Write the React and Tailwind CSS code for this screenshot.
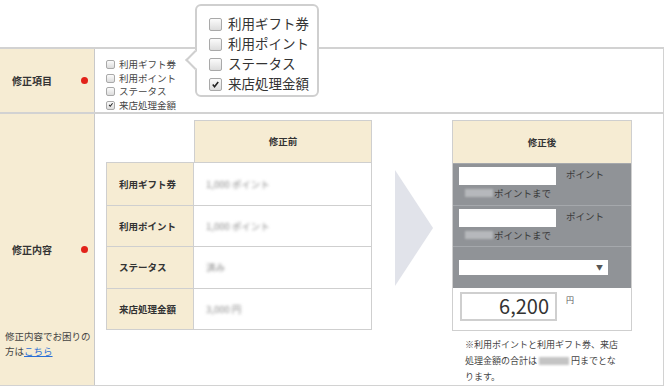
import React from 'react'

const font = { fontFamily: '"Noto Sans CJK JP", "Noto Sans", sans-serif' }

const Box = ({ checked, size }) => (
  <span
    className={`inline-flex items-center justify-center rounded-[2px] border border-[#a9a9a9] bg-gradient-to-b from-[#fbfbfb] to-[#dcdcdc] ${size}`}
  >
    {checked && (
      <svg viewBox="0 0 10 10" className="w-[80%] h-[80%]">
        <path d="M2 5.2 L4 7.6 L8.2 2.2" fill="none" stroke="#222" strokeWidth="1.8" />
      </svg>
    )}
  </span>
)

const items = ['利用ギフト券', '利用ポイント', 'ステータス', '来店処理金額']

const Blur = ({ children }) => (
  <span className="text-[#8a8a8a] blur-[1.4px]">{children}</span>
)

export default function App() {
  const rows = [
    ['利用ギフト券', '1,000 ポイント'],
    ['利用ポイント', '1,000 ポイント'],
    ['ステータス', '済み'],
    ['来店処理金額', '3,000 円'],
  ]
  return (
    <div className="relative w-[664px] h-[386px] bg-white text-[#333]" style={font}>
      {/* popup */}
      <div className="absolute left-[195px] top-[4px] w-[124px] h-[93px] rounded-[6px] border-2 border-[#cfcfcf] bg-white z-10 pl-[12px] pt-[8px]">
        <div className="absolute left-[-9px] top-[47px] w-[14px] h-[14px] rotate-45 border-l-2 border-b-2 border-[#cfcfcf] bg-white"></div>
        {items.map((t, i) => (
          <div key={t} className="flex items-center gap-[6px] h-[20px] text-[13.5px] leading-none text-[#333] relative">
            <Box checked={i === 3} size="w-[13px] h-[13px]" />
            <span>{t}</span>
          </div>
        ))}
      </div>

      <div className="absolute left-0 top-[47px] w-[664px] h-[339px] border-t-2 border-b border-r border-[#d2d2d2] flex flex-col">
        {/* row 1 */}
        <div className="flex h-[65px] border-b-2 border-[#d2d2d2]">
          <div className="w-[95px] bg-[#f6ecd3] border-r border-[#c9c9c9] flex items-center justify-between pl-[12px] pr-[6px]">
            <span className="text-[10px] font-bold text-[#333]">修正項目</span>
            <span className="w-[7px] h-[7px] rounded-full bg-[#e2231a]"></span>
          </div>
          <div className="flex-1 pl-[11px] pt-[9px]">
            {items.map((t, i) => (
              <div key={t} className="flex items-center gap-[4px] h-[13.5px] text-[9.5px] leading-none text-[#444]">
                <Box checked={i === 3} size="w-[9px] h-[9px]" />
                <span>{t}</span>
              </div>
            ))}
          </div>
        </div>

        {/* row 2 */}
        <div className="flex flex-1">
          <div className="w-[95px] bg-[#f6ecd3] border-r border-[#c9c9c9] flex flex-col pl-[5px]">
            <div className="flex items-center justify-between pl-[7px] pr-[6px] mt-[128px]">
              <span className="text-[10px] font-bold text-[#333]">修正内容</span>
              <span className="w-[7px] h-[7px] rounded-full bg-[#e2231a]"></span>
            </div>
            <div className="mt-auto mb-[26px] text-[9.5px] leading-[15px] text-[#444] whitespace-nowrap">
              修正内容でお困りの
              <br />
              方は<span className="text-[#2a6fd6] underline">こちら</span>
            </div>
          </div>

          <div className="flex-1 flex pl-[11px] pt-[6px]">
            {/* before */}
            <div className="w-[266px]">
              <div className="flex h-[42px]">
                <div className="w-[88px]"></div>
                <div className="flex-1 bg-[#f6ecd3] border border-[#cfcfcf] border-b-0 flex items-center justify-center text-[9.5px] font-bold">
                  修正前
                </div>
              </div>
              <div className="border border-[#cfcfcf]">
                {rows.map(([k, v], i) => (
                  <div key={k} className={`flex h-[41.5px] ${i > 0 ? 'border-t border-[#cfcfcf]' : ''}`}>
                    <div className="w-[87px] bg-[#f6ecd3] border-r border-[#cfcfcf] flex items-center pl-[12px] text-[9.5px] font-bold">
                      {k}
                    </div>
                    <div className="flex-1 flex items-center pl-[12px] text-[9.5px]">
                      <Blur>{v}</Blur>
                    </div>
                  </div>
                ))}
              </div>
            </div>

            {/* arrow */}
            <div className="w-[80px] flex justify-center pt-[50px]">
              <svg width="38" height="116" viewBox="0 0 38 116" className="ml-[3px]">
                <polygon points="0,0 38,58 0,116" fill="#e1e3ea" />
              </svg>
            </div>

            {/* after */}
            <div className="w-[180px]">
              <div className="border border-[#cfcfcf]">
                <div className="h-[42px] bg-[#f6ecd3] flex items-center justify-center text-[9.5px] font-bold">
                  修正後
                </div>
                {[0, 1].map((i) => (
                  <div key={i} className="h-[41.5px] bg-[#909397] border-t border-[#a5a8ac] pl-[6px] pt-[3px]">
                    <div className="flex items-start">
                      <div className="w-[97px] h-[18px] bg-white"></div>
                      <span className="ml-[10px] mt-[3px] text-[9.5px] leading-none text-[#3a3a3a]">ポイント</span>
                    </div>
                    <div className="flex items-center mt-[1px] text-[9.5px] leading-[14px] text-[#3a3a3a]">
                      <span className="w-[28px] h-[8px] ml-[6px] mr-[1px] bg-[#b6b8bc] blur-[1.2px]"></span>
                      ポイントまで
                    </div>
                  </div>
                ))}
                <div className="h-[41.5px] bg-[#909397] border-t border-[#a5a8ac] pl-[6px] flex items-center">
                  <div className="w-[149px] h-[15px] bg-white flex items-center justify-end pr-[5px]">
                    <span className="text-[7px] text-[#555]">▼</span>
                  </div>
                </div>
                <div className="h-[42px] bg-white flex items-start pl-[7px] pt-[4px]">
                  <div className="w-[97px] h-[29px] border-2 border-[#cfcfcf] flex items-center justify-end pr-[6px] text-[20px] text-[#333]">
                    6,200
                  </div>
                  <span className="ml-[9px] mt-[2px] text-[8px] text-[#555]">円</span>
                </div>
              </div>
              <div className="w-[170px] pl-[13px] pt-[6px] text-[9px] leading-[16px] text-[#444]">
                ※利用ポイントと利用ギフト券、来店処理金額の合計は
                <span className="inline-block align-middle w-[30px] h-[8px] mx-[2px] bg-[#c4c4c4] blur-[1.2px]"></span>
                円までとなります。
              </div>
            </div>
          </div>
        </div>
      </div>
    </div>
  )
}
